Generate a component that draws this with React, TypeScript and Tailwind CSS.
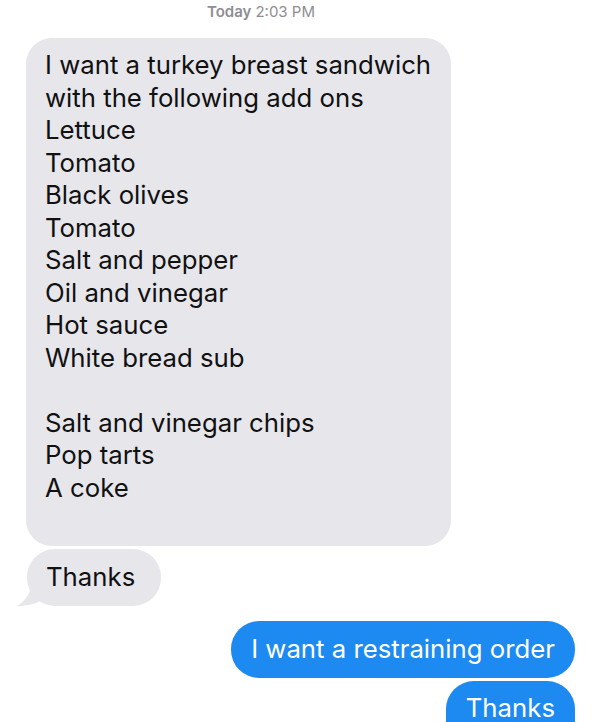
import React from "react";

const lines = [
  "I want a turkey breast sandwich",
  "with the following add ons",
  "Lettuce",
  "Tomato",
  "Black olives",
  "Tomato",
  "Salt and pepper",
  "Oil and vinegar",
  "Hot sauce",
  "White bread sub",
  "",
  "Salt and vinegar chips",
  "Pop tarts",
  "A coke",
];

export default function App() {
  return (
    <div
      className="w-[600px] h-[722px] bg-white overflow-hidden flex flex-col"
      style={{ fontFamily: 'Inter, "Liberation Sans", Arial, sans-serif' }}
    >
      <div className="shrink-0 h-[24px] pl-[207px] flex items-center text-[15px] text-[#8e8e93]">
        <span className="font-semibold">Today</span>
        <span className="ml-[4px]">2:03 PM</span>
      </div>
      <div className="shrink-0 ml-[26px] mt-[14px] w-[425px] bg-[#e6e6eb] rounded-[26px] pl-[19px] pt-[11px] pb-[42px] text-[25.75px] leading-[32.5px] text-[#111]">
        {lines.map((l, i) => (
          <div key={i} className="h-[32.5px] whitespace-nowrap">
            {l}
          </div>
        ))}
      </div>
      <div className="shrink-0 relative ml-[27px] mt-[3px] self-start h-[57px] bg-[#e6e6eb] rounded-[28px] pl-[19px] pr-[26px] flex items-center text-[25.75px] text-[#111]">
        Thanks
        <svg
          className="absolute left-[-10px] bottom-[0px]"
          width="30"
          height="24"
          viewBox="0 0 30 24"
        >
          <path d="M14 0 C14 10 10 18 0 24 C10 24 20 22 28 16 L28 0 Z" fill="#e6e6eb" />
        </svg>
      </div>
      <div className="shrink-0 mr-[25px] mt-[15px] self-end h-[57px] bg-[#1d8af2] rounded-[28px] px-[20px] flex items-center text-[25.75px] text-white">
        I want a restraining order
      </div>
      <div className="shrink-0 mr-[25px] mt-[3px] self-end h-[42px] bg-[#1d8af2] rounded-t-[28px] px-[20px] pt-[13px] leading-[28px] text-[25.75px] text-white">
        Thanks
      </div>
    </div>
  );
}
